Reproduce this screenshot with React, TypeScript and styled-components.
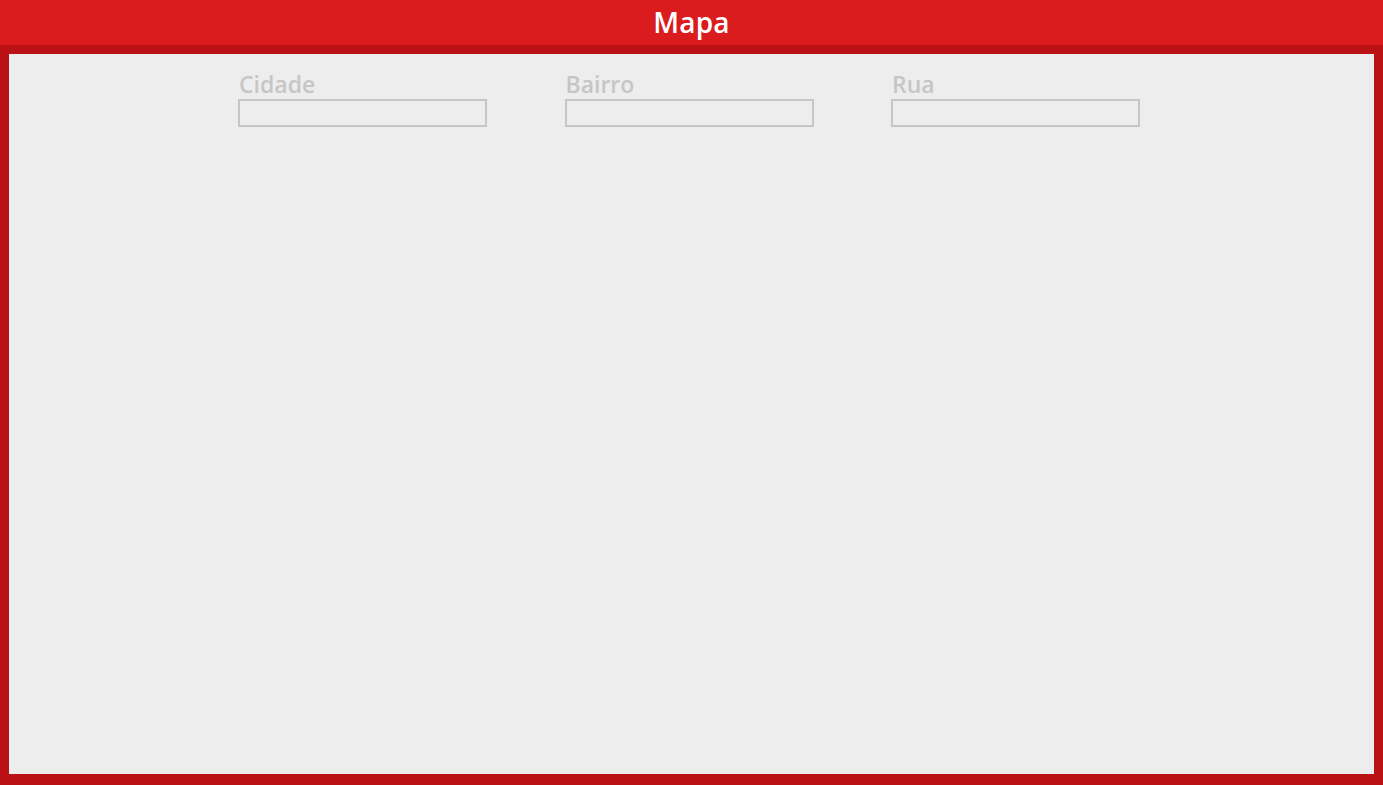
import React from "react";
import styled, { createGlobalStyle } from "styled-components";

const Global = createGlobalStyle`
  html, body { margin: 0; padding: 0; background: #ba1214; }
  body { font-family: "Open Sans", "Noto Sans", sans-serif; }
  * { box-sizing: border-box; }
`;

const Page = styled.div`
  display: flex;
  flex-direction: column;
  height: 785px;
  background: #ba1214;
`;

const Header = styled.header`
  height: 45px;
  flex: 0 0 45px;
  background: #da1c1e;
  display: flex;
  align-items: center;
  justify-content: center;
`;

const Title = styled.h1`
  margin: 0;
  color: #ffffff;
  font-family: "Open Sans", sans-serif;
  font-weight: 600;
  font-size: 28px;
  line-height: 1;
  letter-spacing: 0.2px;
  padding-bottom: 2px;
`;

const Frame = styled.main`
  flex: 1;
  padding: 9px 9px 11px 9px;
  display: flex;
`;

const Canvas = styled.div`
  flex: 1;
  background: #ededed;
  padding-top: 17px;
`;

const Filters = styled.div`
  display: flex;
  justify-content: center;
  gap: 77.5px;
  padding-right: 5px;
`;

const Field = styled.label`
  display: flex;
  flex-direction: column;
  width: 249px;
`;

const Label = styled.span`
  color: #c6c6c6;
  font-family: "Open Sans", sans-serif;
  font-weight: 600;
  font-size: 23px;
  line-height: 26px;
  margin: 0 0 2px 1px;
  white-space: nowrap;
`;

const Input = styled.input`
  height: 28px;
  width: 100%;
  border: 2px solid #c6c6c6;
  background: #ededed;
  outline: none;
  padding: 0 6px;
  font-family: "Open Sans", sans-serif;
  font-size: 14px;
  color: #777;
  margin: 0;
`;

const fields = ["Cidade", "Bairro", "Rua"];

export default function App() {
  return (
    <>
      <Global />
      <Page>
        <Header>
          <Title>Mapa</Title>
        </Header>
        <Frame>
          <Canvas>
            <Filters>
              {fields.map((f) => (
                <Field key={f}>
                  <Label>{f}</Label>
                  <Input type="text" />
                </Field>
              ))}
            </Filters>
          </Canvas>
        </Frame>
      </Page>
    </>
  );
}
